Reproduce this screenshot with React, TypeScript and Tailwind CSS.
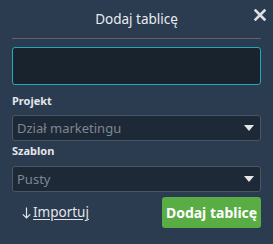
import React from "react";

function Caret() {
  return (
    <svg width="10" height="6" viewBox="0 0 10 6" className="shrink-0">
      <path d="M0 0 H10 L5 6 Z" fill="#e6e6e6" />
    </svg>
  );
}

function Select({ value }: { value: string }) {
  return (
    <div className="flex h-[26px] items-center justify-between rounded-[3px] border border-[#4b5663] bg-[#1d2937] pl-[4px] pr-[6px]">
      <span className="text-[13px] leading-[16px] text-[#7d8792]">{value}</span>
      <Caret />
    </div>
  );
}

export default function App() {
  return (
    <div
      className="relative h-[244px] w-[273px] bg-[#2b3b50] px-[12px]"
      style={{ fontFamily: "'Noto Sans', sans-serif" }}
    >
      <div className="flex h-[39px] items-center justify-center border-b border-[#5b6672]">
        <span className="text-[13.5px] text-[#e8ecef]">Dodaj tablicę</span>
      </div>
      <button className="absolute right-[7px] top-[9px] flex h-[12px] w-[12px] items-center justify-center">
        <svg width="12" height="12" viewBox="0 0 12 12">
          <path d="M1.5 1.5 L10.5 10.5 M10.5 1.5 L1.5 10.5" stroke="#dcdfe2" strokeWidth="2.6" strokeLinecap="square" />
        </svg>
      </button>
      <div className="mt-[8px] h-[38px] rounded-[3px] border border-[#22a9c0] bg-[#19232e]" />
      <div className="mt-[9px] text-[11px] font-bold leading-[14px] text-[#e3e6e9]">Projekt</div>
      <div className="mt-[7px]">
        <Select value="Dział marketingu" />
      </div>
      <div className="mt-[3px] text-[11px] font-bold leading-[14px] text-[#e3e6e9]">Szablon</div>
      <div className="mt-[8px]">
        <Select value="Pusty" />
      </div>
      <div className="mt-[5px] flex items-center justify-between">
        <a className="ml-[10px] flex items-center text-[13.5px] text-[#e3e6e9]">
          <svg width="9" height="12" viewBox="0 0 9 12" className="mr-[2px] mt-[1px]">
            <path d="M4.5 0.5 V11 M0.8 7.3 L4.5 11 L8.2 7.3" stroke="#e3e6e9" strokeWidth="1.2" fill="none" />
          </svg>
          <span className="underline underline-offset-2">Importuj</span>
        </a>
        <button className="h-[31px] w-[99px] rounded-[3px] bg-[#5aac44] text-[14px] font-bold text-white">
          Dodaj tablicę
        </button>
      </div>
    </div>
  );
}
